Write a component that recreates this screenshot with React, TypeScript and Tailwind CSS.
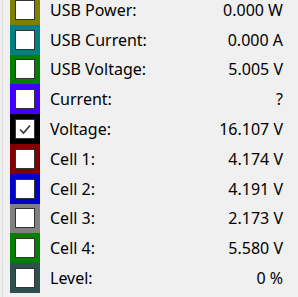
const rows = [
  { label: "USB Power:", value: "0.000 W", color: "bg-[#808000]", checked: false },
  { label: "USB Current:", value: "0.000 A", color: "bg-[#008080]", checked: false },
  { label: "USB Voltage:", value: "5.005 V", color: "bg-[#008000]", checked: false },
  { label: "Current:", value: "?", color: "bg-[#4000ff]", checked: false },
  { label: "Voltage:", value: "16.107 V", color: "bg-[#000000]", checked: true },
  { label: "Cell 1:", value: "4.174 V", color: "bg-[#800000]", checked: false },
  { label: "Cell 2:", value: "4.191 V", color: "bg-[#0000c8]", checked: false },
  { label: "Cell 3:", value: "2.173 V", color: "bg-[#808080]", checked: false },
  { label: "Cell 4:", value: "5.580 V", color: "bg-[#008000]", checked: false },
  { label: "Level:", value: "0 %", color: "bg-[#2f4f4f]", checked: false },
];

function Check({ checked }: { checked: boolean }) {
  return (
    <div className="w-5 h-5 bg-white border border-[#333333] flex items-center justify-center">
      {checked && (
        <svg width="14" height="14" viewBox="0 0 14 14">
          <path d="M2 7.5 L5.5 11 L12 3.5" fill="none" stroke="#333333" strokeWidth="1.6" />
        </svg>
      )}
    </div>
  );
}

export default function App() {
  return (
    <div
      className="w-[298px] h-[297px] bg-[#f0f0f0] overflow-hidden flex"
      style={{ fontFamily: '"Noto Sans", "Open Sans", sans-serif' }}
    >
      <div className="w-[3px] border-r border-[#dcdcdc] shrink-0" />
      <div className="flex-1 pl-[7px] pr-[15px] -mt-[5px]">
        {rows.map((r) => (
          <div key={r.label} className="flex items-center h-[29.8px]">
            <div className={`w-[30px] h-full ${r.color} flex items-center justify-center`}>
              <Check checked={r.checked} />
            </div>
            <span className="ml-[10px] text-[16px] text-black">{r.label}</span>
            <span className="ml-auto text-[16px] text-black">{r.value}</span>
          </div>
        ))}
      </div>
    </div>
  );
}
